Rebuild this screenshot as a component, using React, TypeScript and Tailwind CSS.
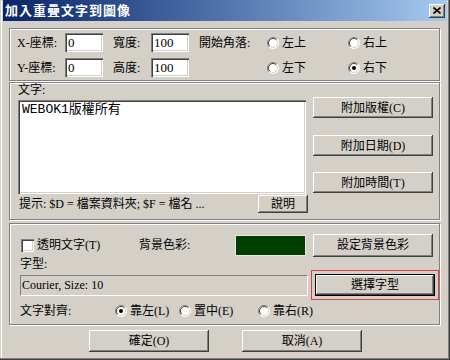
const font = "font-['Liberation_Serif','Noto_Sans_CJK_TC',sans-serif]";
const raised =
  "shadow-[inset_-1px_-1px_#404040,inset_1px_1px_#ffffff,inset_-2px_-2px_#808080,inset_2px_2px_#d4d0c8]";
const sunken =
  "shadow-[inset_1px_1px_#808080,inset_2px_2px_#404040,inset_-1px_-1px_#ffffff,inset_-2px_-2px_#d4d0c8]";
const etched = "border border-[#808080] shadow-[inset_1px_1px_#ffffff,1px_1px_#ffffff]";

function Radio({ checked = false }: { checked?: boolean }) {
  return (
    <svg width="12" height="12" viewBox="0 0 12 12" className="shrink-0">
      <circle cx="6" cy="6" r="5.5" fill="#fff" />
      <path d="M9.9 2.1 A5.5 5.5 0 0 0 2.1 9.9" stroke="#808080" fill="none" />
      <path d="M9.2 2.8 A4.5 4.5 0 0 0 2.8 9.2" stroke="#404040" fill="none" />
      <path d="M9.9 2.1 A5.5 5.5 0 0 1 2.1 9.9" stroke="#ffffff" fill="none" />
      <path d="M9.2 2.8 A4.5 4.5 0 0 1 2.8 9.2" stroke="#d4d0c8" fill="none" />
      {checked && <circle cx="6" cy="6" r="2" fill="#000" />}
    </svg>
  );
}

function RadioItem({ label, checked, w }: { label: string; checked?: boolean; w: string }) {
  return (
    <div className={`flex items-center gap-[3px] ${w}`}>
      <Radio checked={checked} />
      <span>{label}</span>
    </div>
  );
}

function Btn({ label, w = "w-[120px]", h = "h-[22px]" }: { label: string; w?: string; h?: string }) {
  return (
    <div className={`${w} ${h} ${raised} bg-[#d4d0c8] flex items-center justify-center shrink-0`}>
      {label}
    </div>
  );
}

function Field({ value }: { value: string }) {
  return (
    <div className={`w-[38px] h-[19px] bg-white ${sunken} pl-[3px] flex items-center text-[13px]`}>
      {value}
    </div>
  );
}

export default function App() {
  return (
    <div
      className={`w-[450px] h-[360px] bg-[#d4d0c8] text-[12px] leading-[14px] text-black ${font} px-[3px] shadow-[inset_-1px_-1px_#404040,inset_-2px_-2px_#808080,inset_1px_1px_#d4d0c8,inset_2px_2px_#ffffff]`}
    >
      {/* Title bar */}
      <div className="h-[21px] flex items-center justify-between bg-gradient-to-r from-[#0a246a] to-[#a6caf0] pl-[2px] pr-[2px]">
        <span className="text-white font-bold text-[13px] tracking-[1px]">加入重疊文字到圖像</span>
        <div className={`w-[16px] h-[14px] bg-[#d4d0c8] ${raised} flex items-center justify-center`}>
          <svg width="8" height="7" viewBox="0 0 8 7">
            <path d="M0.5 0.5 L7.5 6.5 M7.5 0.5 L0.5 6.5" stroke="#000" strokeWidth="1.6" />
          </svg>
        </div>
      </div>

      <div className="pl-[6px] w-[443px]">
        {/* Group 1: position */}
        <div className={`mt-[7px] h-[53px] w-[431px] ${etched} pl-[7px] pt-[4px] flex flex-col gap-[6px]`}>
          <div className="flex items-center h-[19px]">
            <span className="w-[48px]">X-座標:</span>
            <Field value="0" />
            <span className="ml-[10px] w-[38px]">寬度:</span>
            <Field value="100" />
            <span className="ml-[10px] w-[68px]">開始角落:</span>
            <RadioItem label="左上" w="w-[81px]" />
            <RadioItem label="右上" w="w-[60px]" />
          </div>
          <div className="flex items-center h-[19px]">
            <span className="w-[48px]">Y-座標:</span>
            <Field value="0" />
            <span className="ml-[10px] w-[38px]">高度:</span>
            <Field value="100" />
            <span className="ml-[10px] w-[68px]"></span>
            <RadioItem label="左下" w="w-[81px]" />
            <RadioItem label="右下" checked w="w-[60px]" />
          </div>
        </div>

        {/* Group 2: text */}
        <div className={`mt-[1px] h-[138px] w-[431px] ${etched} pl-[8px] flex`}>
          <div className="w-[290px] flex flex-col">
            <span className="h-[14px]">文字:</span>
            <div
              className={`mt-[3px] w-[288px] h-[94px] bg-white ${sunken} pl-[4px] pt-[2px] font-['Liberation_Mono','Noto_Sans_CJK_TC',monospace] text-[13px] leading-[15px]`}
            >
              WEBOK1版權所有
            </div>
            <div className="mt-[1px] flex items-center justify-between">
              <span className="ml-[1px]">提示: $D = 檔案資料夾; $F = 檔名 ...</span>
              <Btn label="說明" w="w-[50px]" h="h-[18px]" />
            </div>
          </div>
          <div className="ml-[5px] pt-[14px] flex flex-col">
            <Btn label="附加版權(C)" h="h-[21px]" />
            <div className="mt-[17px]">
              <Btn label="附加日期(D)" h="h-[21px]" />
            </div>
            <div className="mt-[16px]">
              <Btn label="附加時間(T)" h="h-[21px]" />
            </div>
          </div>
        </div>

        {/* Group 3: style */}
        <div className={`mt-[3px] h-[102px] w-[431px] ${etched} pl-[10px] pt-[9px] flex flex-col`}>
          <div className="flex items-center h-[24px]">
            <div className="w-[119px] flex items-center gap-[3px] pl-[1px]">
              <div className={`w-[13px] h-[13px] bg-white ${sunken}`}></div>
              <span>透明文字(T)</span>
            </div>
            <span className="w-[96px]">背景色彩:</span>
            <div className="w-[71px] h-[21px] bg-[#003f00] border border-[#e8e8e8]"></div>
            <div className="ml-[7px]">
              <Btn label="設定背景色彩" h="h-[23px]" />
            </div>
          </div>
          <span className="mt-[1px] h-[12px] leading-[12px]">字型:</span>
          <div className="flex items-center h-[30px]">
            <div className="w-[288px] h-[21px] border border-t-[#808080] border-l-[#808080] border-b-white border-r-white flex items-center pl-[1px]">
              Courier, Size: 10
            </div>
            <div className="ml-[3px] w-[128px] h-[30px] border border-[#e03c3c] flex items-center justify-center">
              <div className="border border-black">
                <Btn label="選擇字型" w="w-[118px]" h="h-[20px]" />
              </div>
            </div>
          </div>
          <div className="flex items-center h-[22px]">
            <span className="w-[95px]">文字對齊:</span>
            <RadioItem label="靠左(L)" checked w="w-[64px]" />
            <RadioItem label="置中(E)" w="w-[79px]" />
            <RadioItem label="靠右(R)" w="w-[70px]" />
          </div>
        </div>

        {/* Dialog buttons */}
        <div className="mt-[5px] flex pl-[80px] gap-[33px]">
          <Btn label="確定(O)" />
          <Btn label="取消(A)" />
        </div>
      </div>
    </div>
  );
}
